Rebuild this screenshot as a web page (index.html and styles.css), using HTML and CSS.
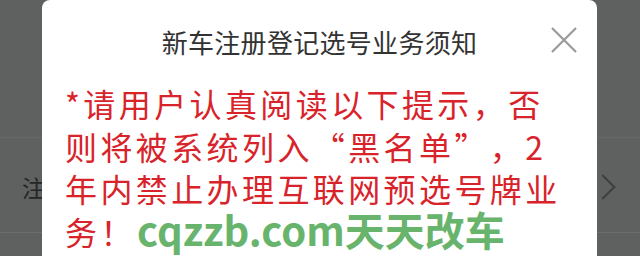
FILE: index.html
```html
<!DOCTYPE html>
<html lang="zh-CN">
<head>
<meta charset="utf-8">
<link rel="stylesheet" href="styles.css">
</head>
<body>
<div class="page">
  <div class="list">
    <div class="row row-top"></div>
    <div class="row row-item">
      <span class="row-label">注册登记</span>
      <span class="chevron"></span>
    </div>
    <div class="row row-bottom"></div>
  </div>
  <div class="modal">
    <div class="modal-head">
      <h1 class="modal-title">新车注册登记选号业务须知</h1>
      <button class="close" aria-label="关闭">
        <svg width="26" height="26" viewBox="0 0 26 26"><path d="M1 1L25 25M25 1L1 25" stroke="#9a9a9a" stroke-width="2.2" fill="none"/></svg>
      </button>
    </div>
    <p class="notice">*请用户认真阅读以下提示，否则将被系统列入<span class="q q-open">“</span>黑名单<span class="q q-close">”</span>，2年内禁止办理互联网预选号牌业务！</p>
    <div class="watermark">cqzzb.com天天改车</div>
  </div>
</div>
</body>
</html>
```
FILE: styles.css
```css
html, body {
  margin: 0;
  padding: 0;
}
body {
  width: 640px;
  height: 256px;
  overflow: hidden;
  background: #5f6060;
  font-family: "Noto Sans CJK SC", "Noto Sans", sans-serif;
}
.page {
  position: relative;
  width: 640px;
  height: 256px;
}
.list {
  display: flex;
  flex-direction: column;
}
.row-top {
  height: 137px;
  border-bottom: 1px solid #676868;
}
.row-item {
  height: 95px;
  border-bottom: 1px solid #6b6c6c;
  display: flex;
  align-items: center;
  justify-content: space-between;
  padding: 4px 28px 0 22px;
  box-sizing: border-box;
}
.row-label {
  font-size: 23px;
  color: #252626;
  white-space: nowrap;
}
.chevron {
  width: 16px;
  height: 16px;
  border-right: 2px solid #3e3f3f;
  border-top: 2px solid #3e3f3f;
  transform: rotate(45deg);
}
.modal {
  position: absolute;
  left: 42px;
  top: 0;
  width: 555px;
  height: 320px;
  background: #fff;
  border-radius: 8px 8px 0 0;
}
.modal-head {
  position: relative;
  height: 82px;
  display: flex;
  align-items: center;
  justify-content: center;
}
.modal-title {
  margin: 0;
  font-size: 26px;
  font-weight: normal;
  color: #333;
  letter-spacing: 0.3px;
}
.close {
  position: absolute;
  right: 20px;
  top: 27px;
  width: 26px;
  height: 26px;
  padding: 0;
  border: 0;
  background: none;
  display: block;
}
.close svg {
  display: block;
}
.notice {
  margin: 0;
  padding: 0 24px 0 23px;
  font-size: 32px;
  line-height: 42.5px;
  letter-spacing: 3.4px;
  color: #d9232a;
}
.q {
  display: inline-block;
  width: 1em;
  letter-spacing: 0;
  margin-right: 3.4px;
}
.q-open {
  text-align: right;
}
.q-close {
  text-align: left;
}
.watermark {
  position: absolute;
  left: 95px;
  top: 200px;
  font-size: 40px;
  font-weight: bold;
  color: #68b46c;
  white-space: nowrap;
}
```
